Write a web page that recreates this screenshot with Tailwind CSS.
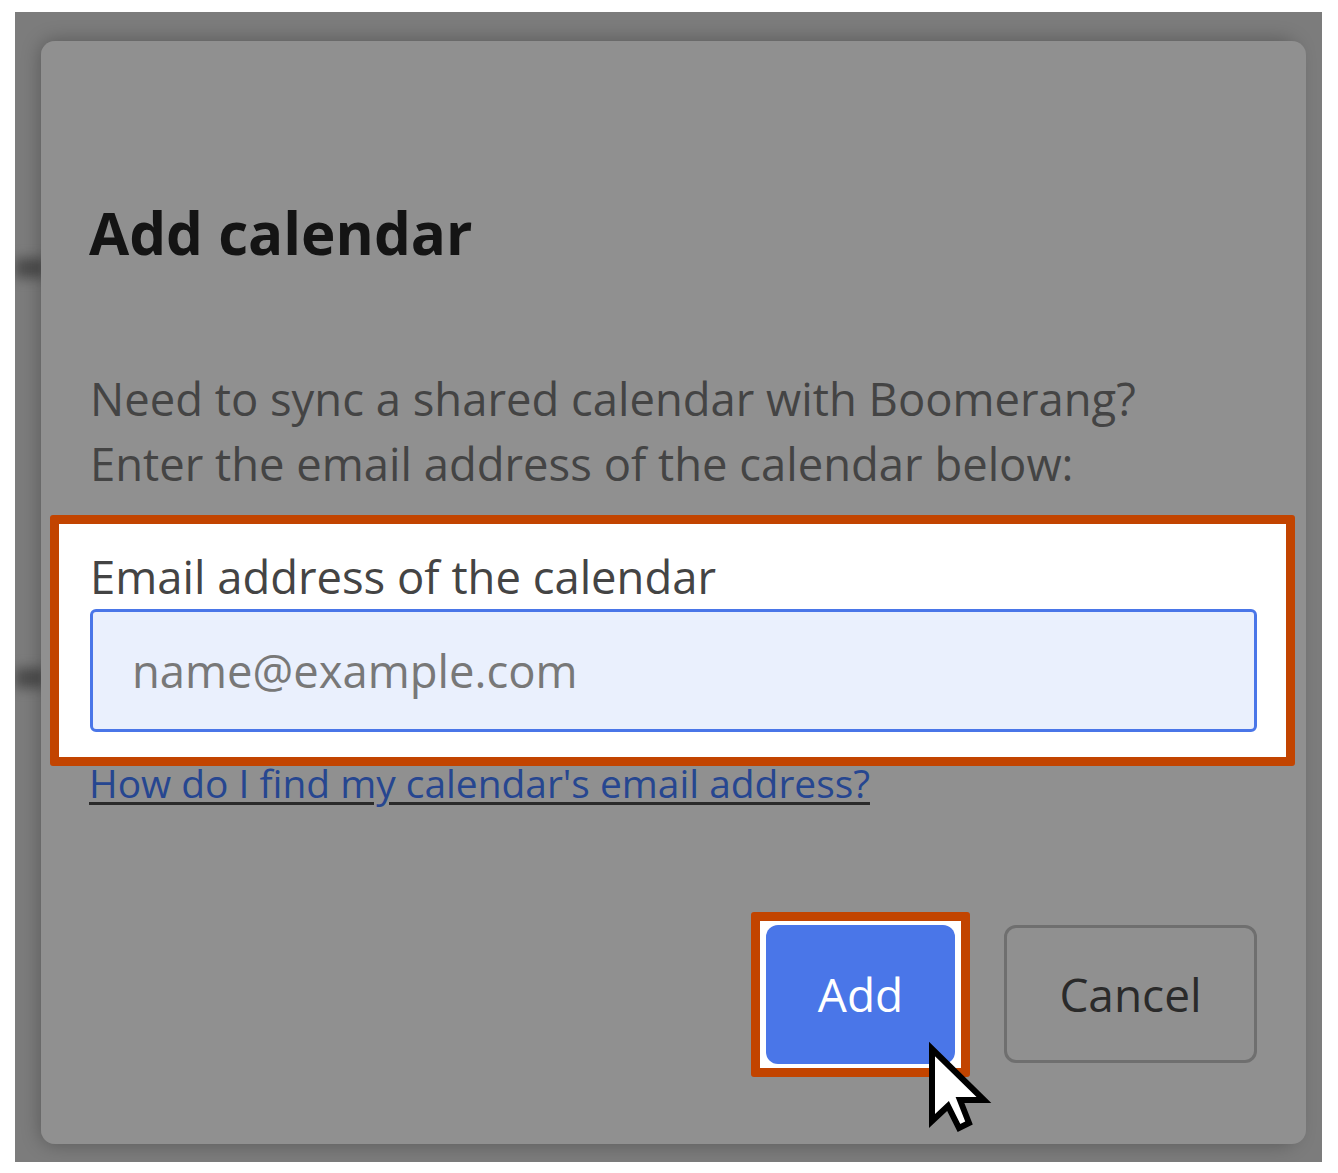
<!DOCTYPE html>
<html><head><meta charset="utf-8"><script src="https://cdn.jsdelivr.net/npm/@tailwindcss/browser@4"></script></head>
<body class="bg-white w-[1338px] h-[1173px] overflow-hidden font-['Open_Sans','Noto_Sans',sans-serif]">
<div class="ml-[15px] pt-[12px]">
<div class="relative w-[1307px] h-[1150px] bg-[#7c7c7c] px-[26px] pt-[29px] overflow-hidden">
  <div class="absolute left-0 top-[246px] w-[30px] h-[20px] bg-[#4c4c4c] blur-[6px]"></div>
  <div class="absolute left-0 top-[656px] w-[30px] h-[20px] bg-[#4c4c4c] blur-[6px]"></div>
  <div class="absolute inset-x-[26px] top-[29px] h-[1103px] rounded-[14px] shadow-[0_0_20px_rgba(0,0,0,0.3)]"></div>
  <div class="relative w-[1265px] h-[1103px] rounded-[14px] bg-[#909090] px-[49px] pt-[160px]">
    <h1 class="-ml-px text-[58.3px] leading-[64px] font-bold text-[#141414]">Add calendar</h1>
    <p class="mt-[101px] text-[45.4px] leading-[65px] text-[#444444]">Need to sync a shared calendar with Boomerang?<br>Enter the email address of the calendar below:</p>
    <div class="mt-[19px] -mx-[40px] w-[1245px] h-[251px] bg-white border-[9px] border-[#c24400] rounded-[3px] px-[31px] pt-[25px]">
      <div class="text-[45.4px] leading-[54px] text-[#444444]">Email address of the calendar</div>
      <div class="mt-[6px] w-[1167px] h-[123px] rounded-[6px] border-[3px] border-[#4a76e8] bg-[#eaf0fd] pl-[39px] flex items-center text-[45.4px] text-[#787878]">name@example.com</div>
    </div>
    <a class="block -ml-px mt-[-9px] w-fit text-[38.9px] leading-[52px] text-[#264690] underline decoration-[#2a2a2a] decoration-[3px] underline-offset-[4px]">How do I find my calendar's email address?</a>
    <div class="mt-[103px] flex justify-end items-center">
      <div class="relative w-[219px] h-[165px] bg-white border-[9px] border-[#c24400] rounded-[3px] px-[6px] py-[4px] mr-[34px]">
        <div class="w-full h-full rounded-[12px] bg-[#4a76e8] flex items-center justify-center text-white text-[46px]">Add</div>
        <svg class="absolute left-[165px] top-[119px] w-[68px] h-[94px]" viewBox="0 0 68 94"><path d="M7 9 L7 81 L23 66 L34 88 L44 83 L35 60 L59 60 Z" fill="#fff" stroke="#000" stroke-width="6" stroke-linejoin="miter"/></svg>
      </div>
      <div class="w-[253px] h-[138px] rounded-[12px] border-[3px] border-[#6f6f6f] flex items-center justify-center text-[46px] text-[#2a2a2a] mb-[1px]">Cancel</div>
    </div>
  </div>
</div>
</div>
</body></html>
